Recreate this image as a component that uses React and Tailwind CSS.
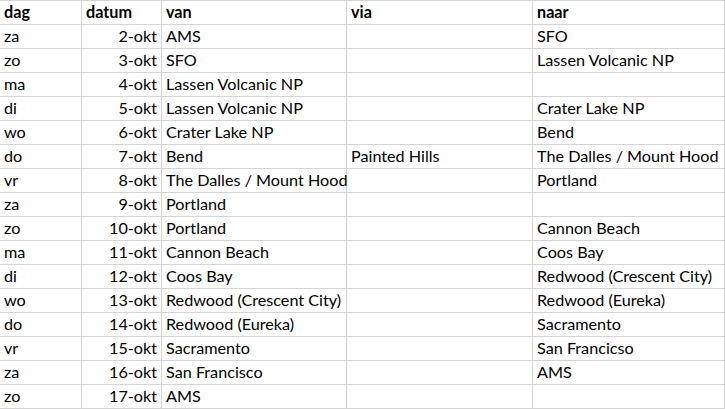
import React from "react";

const rows = [
  ["za", "2-okt", "AMS", "", "SFO"],
  ["zo", "3-okt", "SFO", "", "Lassen Volcanic NP"],
  ["ma", "4-okt", "Lassen Volcanic NP", "", ""],
  ["di", "5-okt", "Lassen Volcanic NP", "", "Crater Lake NP"],
  ["wo", "6-okt", "Crater Lake NP", "", "Bend"],
  ["do", "7-okt", "Bend", "Painted Hills", "The Dalles / Mount Hood"],
  ["vr", "8-okt", "The Dalles / Mount Hood", "", "Portland"],
  ["za", "9-okt", "Portland", "", ""],
  ["zo", "10-okt", "Portland", "", "Cannon Beach"],
  ["ma", "11-okt", "Cannon Beach", "", "Coos Bay"],
  ["di", "12-okt", "Coos Bay", "", "Redwood (Crescent City)"],
  ["wo", "13-okt", "Redwood (Crescent City)", "", "Redwood (Eureka)"],
  ["do", "14-okt", "Redwood (Eureka)", "", "Sacramento"],
  ["vr", "15-okt", "Sacramento", "", "San Francicso"],
  ["za", "16-okt", "San Francisco", "", "AMS"],
  ["zo", "17-okt", "AMS", "", ""],
];

const header = ["dag", "datum", "van", "via", "naar"];

export default function App() {
  return (
    <div
      className="w-[725px] h-[409px] bg-white text-black text-[16.2px] overflow-hidden"
      style={{ fontFamily: "Lato, 'Open Sans', sans-serif" }}
    >
      <div className="grid grid-cols-[82px_80px_185px_186px_192px] border-t border-[#d4d4d4]">
        {header.map((h, i) => (
          <div
            key={i}
            className="h-6 border-b border-r border-[#d4d4d4] px-1 flex items-center font-bold whitespace-nowrap"
          >
            {h}
          </div>
        ))}
        {rows.map((r, ri) =>
          r.map((c, ci) => (
            <div
              key={ri + "-" + ci}
              className={
                "h-6 border-b border-r border-[#d4d4d4] px-1 flex items-center whitespace-nowrap " +
                (ci === 1 ? "justify-end" : "")
              }
            >
              {c}
            </div>
          ))
        )}
      </div>
    </div>
  );
}
